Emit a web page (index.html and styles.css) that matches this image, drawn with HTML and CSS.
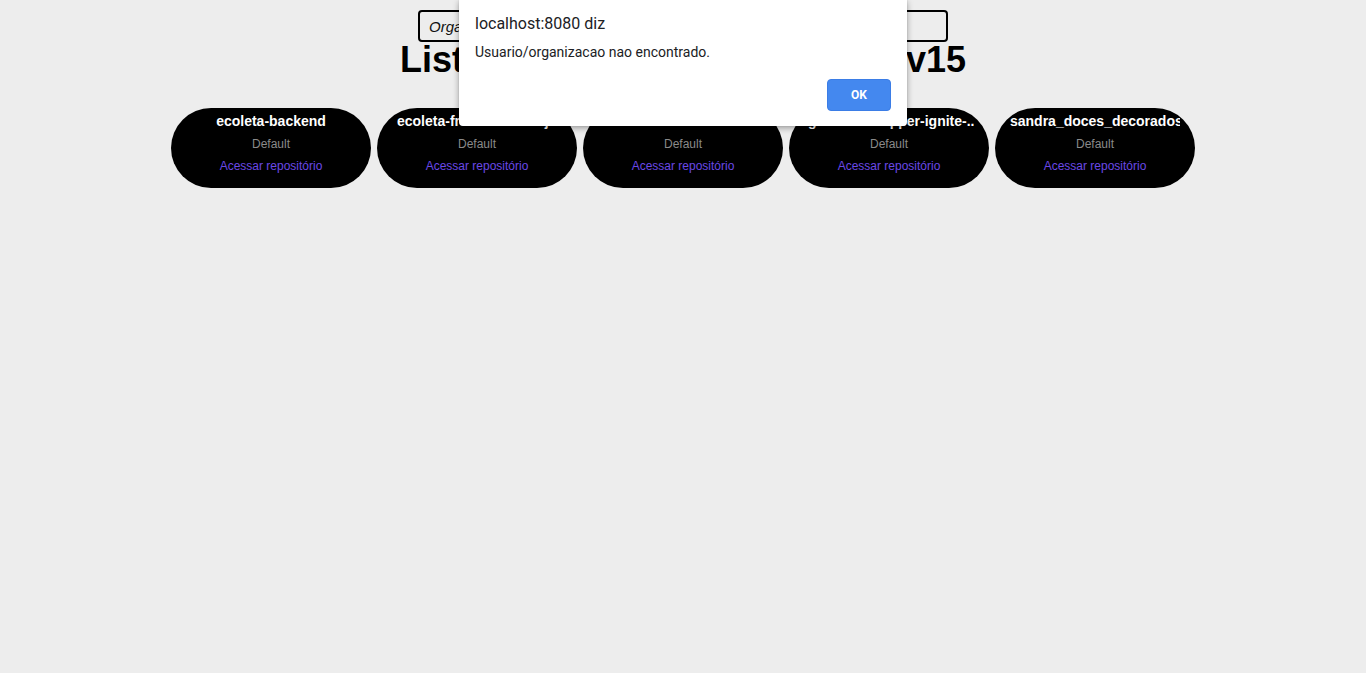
FILE: index.html
```html
<!DOCTYPE html>
<html lang="pt-BR">
<head>
<meta charset="utf-8">
<title>Repositórios</title>
<link rel="stylesheet" href="styles.css">
</head>
<body>
<main class="page">
  <form class="search">
    <input class="search-input" type="text" placeholder="Organização ou usuário">
  </form>
  <h1 class="title">Lista de repositórios do ruidev15</h1>
  <ul class="repo-list">
    <li class="repo">
      <span class="repo-name">ecoleta-backend</span>
      <span class="repo-lang">Default</span>
      <a class="repo-link" href="#">Acessar repositório</a>
    </li>
    <li class="repo">
      <span class="repo-name repo-name--start">ecoleta-frontend-reactjs</span>
      <span class="repo-lang">Default</span>
      <a class="repo-link" href="#">Acessar repositório</a>
    </li>
    <li class="repo">
      <span class="repo-name">ecoleta-mobile</span>
      <span class="repo-lang">Default</span>
      <a class="repo-link" href="#">Acessar repositório</a>
    </li>
    <li class="repo">
      <span class="repo-name repo-name--start">gostack-wrapper-ignite-..</span>
      <span class="repo-lang">Default</span>
      <a class="repo-link" href="#">Acessar repositório</a>
    </li>
    <li class="repo">
      <span class="repo-name repo-name--start">sandra_doces_decorados</span>
      <span class="repo-lang">Default</span>
      <a class="repo-link" href="#">Acessar repositório</a>
    </li>
  </ul>
</main>

<div class="alert" role="alertdialog">
  <p class="alert-origin">localhost:8080 diz</p>
  <p class="alert-message">Usuario/organizacao nao encontrado.</p>
  <div class="alert-actions">
    <button class="alert-ok" type="button">OK</button>
  </div>
</div>
</body>
</html>
```

FILE: styles.css
```css
* {
  box-sizing: border-box;
}

html, body {
  margin: 0;
  padding: 0;
  background: #ededed;
  height: 100%;
}

body {
  font-family: "Liberation Sans", Arial, sans-serif;
  color: #000;
}

.page {
  display: flex;
  flex-direction: column;
  align-items: center;
  padding-top: 10px;
}

.search {
  display: flex;
  justify-content: center;
  margin: 0;
}

.search-input {
  width: 530px;
  height: 32px;
  border: 2px solid #000;
  border-radius: 4px;
  background: #ededed;
  padding: 0 9px;
  font-family: "Liberation Sans", Arial, sans-serif;
  font-size: 15px;
  font-style: italic;
  color: #000;
  outline: none;
}

.search-input::placeholder {
  color: #111;
  font-style: italic;
}

.title {
  margin: 0 0 30px;
  font-size: 36px;
  line-height: 36px;
  font-weight: 700;
  text-align: center;
  white-space: nowrap;
}

.repo-list {
  list-style: none;
  margin: 0;
  padding: 0;
  display: flex;
  gap: 6px;
  justify-content: center;
}

.repo {
  width: 200px;
  height: 80px;
  background: #000;
  border-radius: 40px;
  padding: 5px 15px 0;
  display: flex;
  flex-direction: column;
  align-items: center;
  overflow: hidden;
}

.repo-name {
  display: block;
  width: 170px;
  color: #fff;
  font-weight: 700;
  font-size: 14px;
  line-height: 16px;
  white-space: nowrap;
  overflow: hidden;
  text-align: center;
}

.repo-name--start {
  text-align: left;
}

.repo:nth-child(2) .repo-name {
  padding-left: 5px;
}

.repo:nth-child(4) .repo-name {
  padding-left: 4px;
}

.repo-lang {
  margin-top: 8px;
  color: #8a8a8a;
  font-size: 12px;
  line-height: 14px;
}

.repo-link {
  margin-top: 8px;
  color: #6a48e6;
  font-size: 12px;
  line-height: 14px;
  text-decoration: none;
}

/* Browser alert dialog overlay */
.alert {
  position: absolute;
  top: 0;
  left: 459px;
  width: 448px;
  height: 126px;
  background: #fff;
  border-radius: 0 0 4px 4px;
  box-shadow: 0 2px 6px rgba(0, 0, 0, 0.35), 0 0 1px rgba(0, 0, 0, 0.3);
  padding: 14px 16px 0;
  font-family: Roboto, "Noto Sans", sans-serif;
  color: #202124;
}

.alert-origin {
  margin: 0;
  font-size: 16px;
  line-height: 19px;
}

.alert-message {
  margin: 11px 0 0;
  font-size: 14px;
  line-height: 17px;
}

.alert-actions {
  display: flex;
  justify-content: flex-end;
  margin-top: 18px;
}

.alert-ok {
  width: 64px;
  height: 32px;
  border: 1px solid #3b7de6;
  border-radius: 4px;
  background: #4488ef;
  color: #fff;
  font-family: Roboto, "Noto Sans", sans-serif;
  font-weight: 700;
  font-size: 12px;
  padding: 0;
}
```
